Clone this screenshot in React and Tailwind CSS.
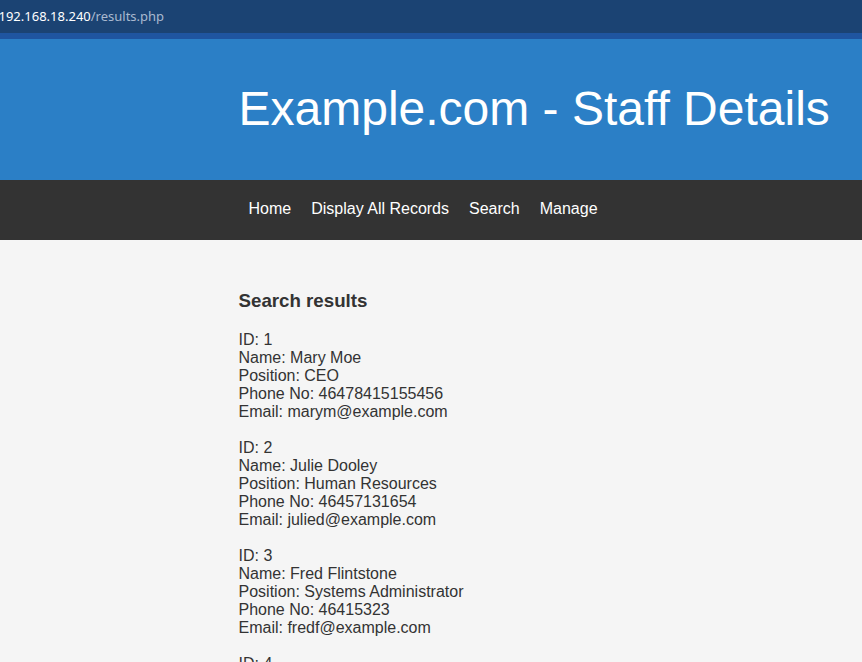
import React from 'react'

const records = [
  { id: 1, name: 'Mary Moe', position: 'CEO', phone: '46478415155456', email: 'marym@example.com' },
  { id: 2, name: 'Julie Dooley', position: 'Human Resources', phone: '46457131654', email: 'julied@example.com' },
  { id: 3, name: 'Fred Flintstone', position: 'Systems Administrator', phone: '46415323', email: 'fredf@example.com' },
  { id: 4, name: 'Barney Rubble', position: 'Help Desk', phone: '324323232', email: 'barneyr@example.com' },
]

const App = () => {
  return (
    <div className="min-h-screen bg-[#f5f5f5] font-['Liberation_Sans',Arial,sans-serif] text-[#333]">
      {/* address bar */}
      <div className="h-[33px] bg-[#1b4373] flex items-center overflow-hidden">
        <span className="font-['Noto_Sans',sans-serif] text-[13px] ml-[-1.5px] text-white">
          192.168.18.240<span className="text-[#a9b9cf]">/results.php</span>
        </span>
      </div>
      <div className="h-[6px] bg-[#1f55a0]"></div>

      <header className="bg-[#2b7fc6] h-[141px] flex items-center pl-[238.5px]">
        <h1 className="text-white text-[48px] leading-[55px] mt-[-2px]">Example.com - Staff Details</h1>
      </header>

      <nav className="bg-[#333333] h-[60px] flex items-center pl-[238.5px] pb-[2px]">
        {['Home', 'Display All Records', 'Search', 'Manage'].map((item) => (
          <a key={item} className="px-[10px] text-white text-[16px]">{item}</a>
        ))}
      </nav>

      <main className="pl-[238.5px] pt-[50px] pb-10">
        <h3 className="text-[18.72px] font-bold leading-[22px] mb-[19px]">Search results</h3>
        <div className="text-[16px] leading-[18px]">
          {records.map((r) => (
            <div key={r.id} className="mb-[18px]">
              <div>ID: {r.id}</div>
              <div>Name: {r.name}</div>
              <div>Position: {r.position}</div>
              <div>Phone No: {r.phone}</div>
              <div>Email: {r.email}</div>
            </div>
          ))}
        </div>
      </main>
    </div>
  )
}

export default App
